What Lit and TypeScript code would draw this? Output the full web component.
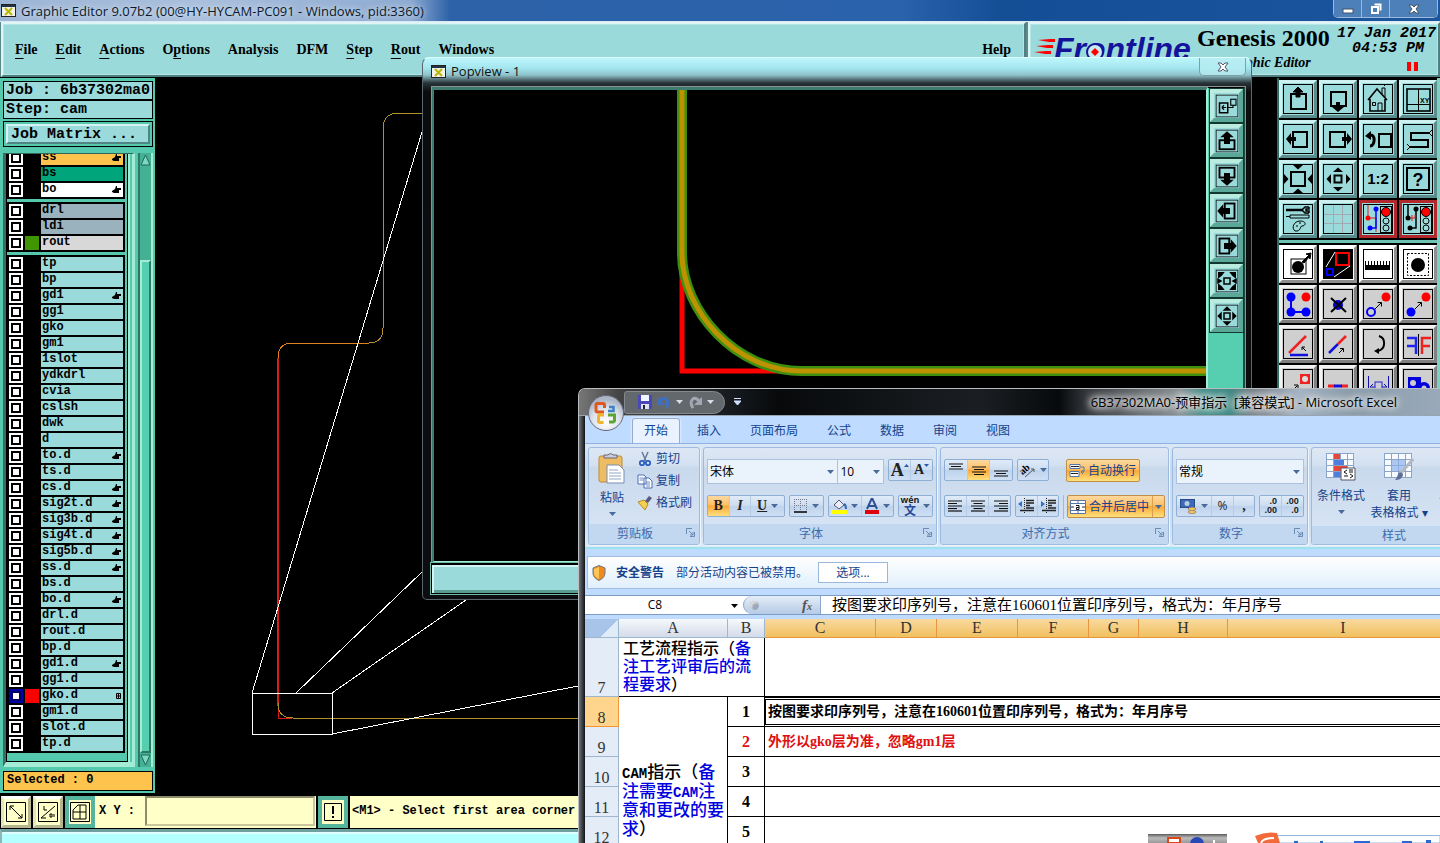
import { LitElement, html, svg, css, TemplateResult } from "lit";
import { customElement, property } from "lit/decorators.js";

const base = css`
  *, *::before, *::after { box-sizing: border-box; }
  button, input, select { font: inherit; color: inherit; margin: 0; border-radius: 0; }
  button { cursor: pointer; padding: 0; }
  svg { display: block; flex: none; }
`;

/* ---------- CAM tool icons, drawn on a 32 x 32 grid ---------- */

const up = svg`<path d="M16 4l5 5h-3v5h-4v-5h-3z" stroke="#000"/>`;
const arrow = (deg: number, x: number, y: number, s = 1) =>
  svg`<path d="M0 -5L6 0H2V5H-2V0H-6Z" transform="translate(${x} ${y}) rotate(${deg}) scale(${s})"/>`;
const tip = (deg: number, x: number, y: number) =>
  svg`<path d="M0 -2.5L5 2H-5Z" transform="translate(${x} ${y}) rotate(${deg})"/>`;
const box = (x: number, y: number, w: number, h: number, sw = 2) =>
  svg`<rect x=${x} y=${y} width=${w} height=${h} fill="none" stroke="#000" stroke-width=${sw}/>`;
const dot = (x: number, y: number, c: string, r = 4.5) => svg`<circle cx=${x} cy=${y} r=${r} fill=${c}/>`;
const lights = svg`${box(18.5, 3.5, 11, 26, 1)}<circle cx="24" cy="9" r="4.500" fill="#f00" stroke="#000"/><circle cx="24" cy="18" r="3" fill="none" stroke="#000"/><circle cx="24" cy="25" r="3" fill="none" stroke="#000"/>`;

const icons: Record<string, TemplateResult | unknown> = {
  panUp: svg`${box(9, 11, 15, 15)}${up}`,
  panDown: svg`${box(9, 9, 15, 14)}${arrow(180, 16, 24)}`,
  home: svg`<g fill="none" stroke="#000"><path d="M6 17L15 6l10 11M8 16v12h15V16" stroke-width="1.600"/><path d="M20 11V5h3v9M16 28v-8h4v8M10.500 19.500h3v3h-3zM22 3l2-2"/></g>`,
  overview: svg`${box(5, 6, 23, 22, 1.6)}<path d="M16.500 6v22M5 21.500h23" stroke="#000"/><text x="18" y="20" font-size="7" font-family="Liberation Sans">XY</text>`,
  panLeft: svg`${box(11, 9, 14, 15)}${arrow(-90, 9, 16)}`,
  panRight: svg`${box(8, 9, 15, 15)}${arrow(90, 25, 16)}`,
  previous: svg`${box(17, 11, 12, 13)}<path d="M8 12c6-1 5 11 0 11" fill="none" stroke="#000" stroke-width="3"/><path d="M3 13l6-5v9z"/>`,
  serp: svg`<path d="M27 10H9v7h17v7H8" fill="none" stroke="#000" stroke-width="2"/><path d="M27 10l3-3M27 10l3 3M8 24l-3-3M8 24l-3 3" stroke="#000"/>`,
  zoomIn: svg`${box(9, 9, 14, 14)}${tip(180, 16, 4)}${tip(0, 16, 28)}${tip(90, 4, 16)}${tip(-90, 28, 16)}`,
  zoomOut: svg`${box(12.5, 12.5, 7, 7)}${tip(0, 16, 7)}${tip(180, 16, 26)}${tip(-90, 7, 16)}${tip(90, 26, 16)}`,
  ratio: svg`<text x="16" y="21" text-anchor="middle" font-size="15" font-weight="bold" font-family="Liberation Sans">1:2</text>`,
  help: svg`${box(5, 5, 22, 22)}<text x="16" y="23" text-anchor="middle" font-size="18" font-weight="bold" font-family="Liberation Sans">?</text>`,
  tools: svg`<path d="M4 7h17" stroke="#000" stroke-width="2.500"/><path d="M27 4h-4l-3 3 3 3h4M27 4v2h-3v2h3v2" stroke="#000" stroke-width="1.500" fill="none"/><path d="M4 13.500h4v-1.500h19v3H8v-1.500" fill="none" stroke="#000"/><path d="M13 28c-4-3-1-10 5-10 7 0 6 5 2 5-2 0-1 6-7 5zM14 23h2M17 20h2" fill="none" stroke="#000"/>`,
  grid: svg`<path d="M11.500 2v28M20.500 2v28M2 11.500h28M2 20.500h28" stroke="#a3a8b2" fill="none"/>`,
  netA: svg`<path d="M6 2v13h8v14" fill="none" stroke="#d22"/><path d="M14 6v19H8" fill="none" stroke="#00f" stroke-width="1.500"/>${dot(14, 6, "#00f", 2.5)}${dot(6, 15, "#f00", 2.5)}${dot(8, 25, "#00f", 2.5)}${lights}`,
  netB: svg`<path d="M6 2v13M14 6v19H8" fill="none" stroke="#000" stroke-width="1.500"/><path d="M7 15h6v-3M10 12v3M10 15v3" stroke="#d22" fill="none"/>${dot(14, 6, "#000", 2.5)}${dot(6, 15, "#000", 2.5)}${dot(8, 25, "#000", 2.5)}${lights}`,
  selOne: svg`${box(9, 11, 15, 15, 1)}${dot(16, 19, "#000", 6)}<path d="M20 14l7-7-3-1 5-1-1 6-1-2-5 6z" stroke="#000"/>`,
  selPoly: svg`<rect x="2" y="2" width="28" height="28" fill="#000"/><rect x="14" y="5" width="13" height="12" fill="none" stroke="#f00" stroke-width="2"/><rect x="5" y="21" width="6" height="6" fill="none" stroke="#00f" stroke-width="2"/><path d="M4 19l9-15M12 29l16-11" stroke="#fff"/>`,
  ruler: svg`<path d="M3 13h1v4h2v-4h1v4h2v-4h1v4h2v-4h1v4h2v-4h1v4h2v-4h1v4h2v-4h1v4h2v-4h1v4h2v-4h1v9H3z"/>`,
  selRef: svg`<rect x="5.500" y="5.500" width="21" height="22" fill="none" stroke="#000" stroke-dasharray="2 1.500"/>${dot(16, 17, "#000", 7)}`,
  nodes: svg`<path d="M9 9v15h15" fill="none" stroke="#00f" stroke-width="2"/>${dot(9, 9, "#00f")}${dot(9, 24, "#00f")}${dot(24, 24, "#00f")}${dot(24, 9, "#f00")}`,
  delNode: svg`${dot(16, 17, "#00c", 5)}<path d="M9 10l15 14M24 10L9 24" stroke="#000" stroke-width="2"/>`,
  moveA: svg`<circle cx="9" cy="24" r="4" fill="none" stroke="#00f" stroke-width="2"/>${dot(24, 9, "#f00")}<path d="M13 21l6-6M15.500 14.500h4v4" fill="none" stroke="#000"/>`,
  moveB: svg`${dot(9, 24, "#00f")}${dot(24, 9, "#f00")}<path d="M13 21l6-6M15.500 14.500h4v4" fill="none" stroke="#000"/>`,
  angle: svg`<path d="M7 25L24 8" stroke="#e22" stroke-width="2.500"/><path d="M8 27h18" stroke="#11d" stroke-width="2.500"/><path d="M24 23l-4-4M20 22v-3h3" stroke="#000" fill="none"/>`,
  line: svg`<path d="M7 25l9-9" stroke="#11d" stroke-width="2.500"/><path d="M16 16l8-8" stroke="#e22" stroke-width="2.500"/><path d="M17 25l4-4M18 20.500h3.500V24" stroke="#000" fill="none"/>`,
  rotate: svg`<path d="M17 8c7 2 7 13-1 15" fill="none" stroke="#000" stroke-width="2"/><path d="M12 23l5-3v6z"/>`,
  mirror: svg`<path d="M5 10h9v16M14 18H5" fill="none" stroke="#22e" stroke-width="2.500"/><path d="M16.500 6v22" stroke="#000"/><path d="M29 10h-9v16M20 18h8" fill="none" stroke="#e22" stroke-width="2.500"/>`,
  copy: svg`<rect x="18" y="6" width="10" height="10" fill="#e22"/>${dot(23, 11, "#ddd", 3)}<path d="M9 24l6-6M12 17h4v4" stroke="#000" fill="none"/>`,
  stretch: svg`<path d="M6 18h7M19 18h7" stroke="#e22" stroke-width="3"/><path d="M12 18h8" stroke="#11d" stroke-width="3"/>`,
  between: svg`<path d="M6.500 8v24M26.500 8v24M8 19h17M8 19l3-3M25 19l-3-3" stroke="#11a" fill="none"/><rect x="13" y="14" width="7" height="9" fill="#ccd" stroke="#22c"/>`,
  union: svg`<rect x="6" y="9" width="13" height="12" fill="#00d"/><circle cx="11" cy="15" r="3" fill="#ccc"/><circle cx="22" cy="20" r="6" fill="#00d"/><circle cx="22" cy="20" r="2.500" fill="#ccc"/>`,
  popBox: svg`${box(6, 12, 11, 13)}${box(21, 7, 7, 8, 1.5)}<path d="M17 18h7v-3M9 18h6M9 18l3-3M9 18l3 3" fill="none" stroke="#000" stroke-width="1.500"/>`,
  popUp: svg`${box(6, 15, 20, 12, 2.5)}<path d="M16 3l9 8h-5v9h-8v-9H7z"/>`,
  popDown: svg`${box(6, 5, 20, 13, 2.5)}<path d="M16 29l9-8h-5v-9h-8v9H7z"/>`,
  popLeft: svg`${box(13, 6, 13, 20, 2.5)}<path d="M3 16l8-9v5h9v8h-9v5z"/>`,
  popRight: svg`${box(6, 6, 13, 20, 2.5)}<path d="M29 16l-8-9v5h-9v8h9v5z"/>`,
  popFit: svg`${box(12, 12, 8, 8, 2)}<path d="M4 4h9l-4 5-5 4zM28 4h-9l4 5 5 4zM4 28h9l-4-5-5-4zM28 28h-9l4-5 5-4zM3 12l7 4-7 4zM29 12l-7 4 7 4z"/>`,
  popAll: svg`${box(12, 12, 8, 8, 2)}<path d="M16 3l6 6H10zM16 29l6-6H10zM3 16l6-6v12zM29 16l-6-6v12z"/>`,
};

const icon = (name: string, size = 32) =>
  svg`<svg width=${size} height=${size} viewBox="0 0 32 32" aria-hidden="true">
    ${icons[name]}<rect x="1.500" y="1.500" width="29" height="29" fill="none" stroke="#000"/></svg>`;

const xLogo = html`<svg width="15" height="13" viewBox="0 0 15 13"><rect x=".5" y=".5" width="14" height="12" fill="#f2f2ea" stroke="#222"/><rect x="1" y="1" width="13" height="2" fill="#234"/><path d="M4 4l7 7M11 4l-7 7" stroke="#b8b800" stroke-width="2"/></svg>`;

/* ---------- Layer list ---------- */

interface Layer { name: string; tone?: string; swatch?: string; mark?: string; active?: boolean }
const hands = new Set(["ss", "bo", "gd1", "to.d", "cs.d", "sig2t.d", "sig3b.d", "sig4t.d", "sig5b.d", "ss.d", "bo.d", "gd1.d"]);
const groups: Layer[][] = [
  [{ name: "ss", tone: "amber" }, { name: "bs", tone: "green" }, { name: "bo", tone: "white" }],
  [{ name: "drl", tone: "slate" }, { name: "ldi", tone: "slate" }, { name: "rout", tone: "grey", swatch: "lime" }],
  "tp bp gd1 gg1 gko gm1 1slot ydkdrl cvia cslsh dwk d to.d ts.d cs.d sig2t.d sig3b.d sig4t.d sig5b.d ss.d bs.d bo.d drl.d rout.d bp.d gd1.d gg1.d gko.d gm1.d slot.d tp.d"
    .split(" ")
    .map((name) => (name === "gko.d" ? { name, swatch: "red", active: true, mark: "grid" } : { name })),
];

@customElement("layer-panel")
class LayerPanel extends LitElement {
  static styles = [base, css`
    :host { display: flex; flex-direction: column; width: 155px; padding: 3px 2px 2px 3px; background: #55c9ad; border-bottom: 2px solid #000;
      font: bold 15px/17px "Liberation Mono", monospace; color: #000; }
    .info { height: 19px; border: 1px solid #000; background: #9adadb; padding: 0 2px; white-space: pre; }
    .matrix { margin-top: 2px; height: 26px; border: 1px solid #000; padding: 2px; }
    .matrix button { display: block; width: 100%; height: 100%; text-align: left; padding: 0 3px; background: #9adadb;
      border: 2px solid; border-color: #d5f3f3 #4f8585 #4f8585 #d5f3f3; }
    .lists { flex: 1; min-height: 0; margin: 6px 0 4px; display: flex; gap: 3px; }
    .frame { flex: 1; min-width: 0; display: flex; border-top: 1px solid #2f665a; border-left: 3px solid #3d6c62; border-bottom: 5px solid #a5ecd6; border-right: 3px solid #a5ecd6; padding-right: 4px; }
    .list { flex: 1; min-width: 0; overflow: hidden; display: flex; flex-direction: column; justify-content: flex-end; gap: 3px;
      border: 1px solid #000; border-top: 0; padding: 0 2px 8px 0; box-shadow: 2px 0 0 #a5ecd6; }
    .group { flex: none; background: #000; padding: 1px 2px; }
    .row { height: 16px; padding: 1px 0; display: grid; grid-template-columns: 14px 14px 1fr; gap: 2px; }
    .row input { appearance: none; width: 14px; height: 14px; background: #fff; border: 2px solid #fff; display: grid; }
    .row input::before { content: ""; border: 2px solid #000; background: #fff; }
    .row.active input { border-color: #0000a8; }
    .row.active input::before { border-color: #000060; }
    .lime { background: #3f9600; } .red { background: #f00; }
    .name { display: flex; align-items: center; justify-content: space-between; padding: 0 2px 1px 1px; background: #9adadb; font-size: 12px; line-height: 13px; }
    .amber .name { background: #fdc34c; } .green .name { background: #00a57c; } .white .name { background: #fff; }
    .slate .name { background: #9ab2bd; } .grey .name { background: #d8d8d8; }
    .scroll { width: 15px; display: flex; flex-direction: column; border-right: 2px solid #a5ecd6; border-left: 2px solid #2f7866; background: #44b094; }
    .thumb { margin-top: 93px; flex: 1; background: #55cfb0; border: 2px solid; border-color: #a5ecd6 #2f7866 #2f7866 #a5ecd6; }
    .selected { height: 20px; border: 1px solid #000; background: #fdc34c; padding: 0 3px; font-size: 12px; line-height: 17px; }
  `];
  hand = html`<svg width="9" height="8" viewBox="0 0 9 8"><path d="M0 5l3-2 1-3h1v2h4v2H7v3H2L0 6z"/></svg>`;
  gridMark = html`<svg width="5" height="6" viewBox="0 0 5 6"><path d="M.5 .5h4v5h-4zM2.500 0v6M0 3h5" fill="none" stroke="#000"/></svg>`;
  render() {
    const tri = (d: string) => html`<svg width="11" height="14" viewBox="0 0 11 14"><path d=${d} fill="#7fd8c4" stroke="#1f6858"/></svg>`;
    return html`
      <div class="info">Job : 6b37302ma0</div>
      <div class="info">Step: cam</div>
      <div class="matrix"><button>Job Matrix ...</button></div>
      <div class="lists">
        <div class="frame"><div class="list">
          ${groups.map((g) => html`<div class="group">${g.map((l) => html`
            <label class="row ${l.tone ?? ""} ${l.active ? "active" : ""}">
              <input type="checkbox"><span class=${l.swatch ?? ""}></span>
              <span class="name">${l.name}${hands.has(l.name) ? this.hand : l.mark ? this.gridMark : ""}</span>
            </label>`)}</div>`)}
        </div></div>
        <div class="scroll">${tri("M5.5 2L10 12H1z")}<div class="thumb"></div>${tri("M5.5 12L10 2H1z")}</div>
      </div>
      <div class="selected">Selected : 0</div>`;
  }
}

/* ---------- Tool grid ---------- */

@customElement("tool-box")
class ToolBox extends LitElement {
  static styles = [base, css`
    :host { display: block; width: 163px; background: #000; border-left: 2px solid #2f6e62; border-right: 3px solid #7fd0c0; }
    .grid { display: grid; grid-template-columns: repeat(4, 38px); gap: 2px; padding-top: 2px; }
    .grid + .grid { margin-top: 2px; border-top: 3px solid #6fc4b4; padding-top: 2px; }
    button { width: 38px; height: 38px; background: #9adadb; border: 3px solid; border-color: #cdf0f0 #5b8c8e #5b8c8e #cdf0f0; }
    .netA, .netB { border-color: #b3282c; }
    .pale { background: #fff; border-color: #fff #8e8e8e #8e8e8e #fff; }
    .plain { background: #cfcfcf; border-color: #f2f2f2 #808080 #808080 #f2f2f2; }
  `];
  top = ["panUp", "panDown", "home", "overview", "panLeft", "panRight", "previous", "serp", "zoomIn", "zoomOut", "ratio", "help", "tools", "grid", "netA", "netB"];
  edit = ["selOne", "selPoly", "ruler", "selRef", "nodes", "delNode", "moveA", "moveB", "angle", "line", "rotate", "mirror", "copy", "stretch", "between", "union"];
  render() {
    return html`
      <div class="grid">${this.top.map((n) => html`<button class="tool ${n === "grid" ? "" : n}" aria-label=${n}>${icon(n)}</button>`)}</div>
      <div class="grid">${this.edit.map((n, i) => html`<button class=${i < 4 ? "pale" : "plain"} aria-label=${n}>${icon(n)}</button>`)}</div>`;
  }
}

/* ---------- Popview window ---------- */

@customElement("pop-view")
class PopView extends LitElement {
  static styles = [base, css`
    :host { display: flex; flex-direction: column; padding: 0 5px 5px 8px; border: 1px solid #59666c; border-top-color: #dff; border-radius: 7px 7px 5px 5px;
      background: linear-gradient(#bdf6fb 0, #a3e6ef 10px, #8fc3cb 17px, #2a3438 25px, #0a0c0e 34px, #0c0d10); }
    .title { height: 28px; display: flex; align-items: flex-start; gap: 5px; font: 13px/26px "Open Sans", sans-serif; color: #111; }
    .title svg { margin-top: 7px; }
    .title span { flex: 1; }
    .close { width: 47px; height: 18px; border: 1px solid #7ea0a8; border-top: 0; border-radius: 0 0 5px 5px; background: #b7ecf3cc; display: grid; place-items: center; }
    .close svg { margin: 0; }
    .body { flex: 1; min-height: 0; display: flex; border: 1px solid #8a9296; border-bottom: 0; background: #000; }
    .view { flex: 1; min-width: 0; border: 2px solid; border-color: #3f7c70 #a5ecd6 #a5ecd6 #3f7c70; border-top-width: 3px; }
    .view svg { width: 100%; height: 100%; }
    .tools { width: 37px; padding: 1px 2px; background: #55cfb0; border-right: 2px solid #1a4a40; display: flex; flex-direction: column; gap: 2px; border-top: 1px solid #000; }
    .tools button { width: 33px; height: 33px; display: grid; place-items: center; background: #9adadb; border: 4px solid; border-color: #b9ecdf #5aa898 #5aa898 #b9ecdf; outline: 1px solid #12382f; }
    .foot { height: 31px; border: 1px solid #000; background: #9adadb; border-top: 2px solid #000; box-shadow: inset 2px 2px #d5f3f3, inset -2px -3px #5b9c92; outline: 1px solid #70bba8; }
  `];
  render() {
    return html`
      <div class="title">${xLogo}<span>Popview - 1</span>
        <button class="close" aria-label="Close"><svg width="12" height="10" viewBox="0 0 12 10"><path d="M1 1h3l2 2 2-2h3L8 5l3 4H8L6 7 4 9H1l3-4z" fill="#fff" stroke="#556"/></svg></button></div>
      <div class="body">
        <div class="view"><svg><g fill="none">
          <path d="M248 180V281H360" stroke="#f00" stroke-width="5"/>
          <path d="M248 0V163C248 221 302 281 367 281H2000" stroke="#3f8f10" stroke-width="10"/>
          <path d="M248 0V163C248 221 302 281 367 281H2000" stroke="#bd9200" stroke-width="5"/>
        </g></svg></div>
        <div class="tools">${["popBox", "popUp", "popDown", "popLeft", "popRight", "popFit", "popAll"].map((n) => html`<button aria-label=${n}>${icon(n, 24)}</button>`)}</div>
      </div>
      <div class="foot"></div>`;
  }
}

/* ---------- Excel window ---------- */

const caret = html`<svg class="caret" width="7" height="4" viewBox="0 0 7 4"><path d="M0 0h7L3.500 4z" fill="currentColor"/></svg>`;
const lines = (ws: number[], align: number, y = 3) => html`<svg width="16" height="16" viewBox="0 0 16 16">${ws.map((w, i) =>
  svg`<path d="M${(16 - w) * align} ${y + i * 2.5}h${w}" stroke="#111" stroke-width="1.200"/>`)}</svg>`;
const indent = (d: string) => html`<svg width="16" height="16" viewBox="0 0 16 16"><path d="M8 2.500h8M8 5h8M8 7.500h4M8 10h8M2 12.500h14" stroke="#222" stroke-width="1.300"/><path d="M6.500 0v16" stroke="#222" stroke-dasharray="1 1"/><path d=${d} fill="#2f6fd0"/></svg>`;

@customElement("excel-window")
class ExcelWindow extends LitElement {
  @property() file = "6B37302MA0-预审指示";
  static styles = [base, css`
    :host { display: flex; flex-direction: column; overflow: hidden; padding-left: 6px; border: 1px solid #b9bdc2; border-right: 0; border-bottom: 0; border-radius: 7px 0 0 0;
      font: 12px/16px "Open Sans", "Noto Sans CJK SC", sans-serif; color: #15428b;
      background: linear-gradient(90deg, #6d7377 0, #202327 5px, #000 7px); }
    button { background: none; border: 0; }
    .title { flex: none; height: 27px; display: flex; align-items: center; margin-left: -6px; padding-left: 45px; position: relative; border-bottom: 1px solid #98a4b0;
      background: linear-gradient(90deg, #777 0, #444 40px, #14171b 160px, #07090b 200px, #1b1f23 400px, #07090b 480px, #383c40 510px, #8b9296 600px, #3f8f88 625px, #3d8a84 650px, #777f88 675px, #a4b4c4 720px, #8b9cab 770px, #99a9b9); }
    .qat { display: flex; align-items: center; gap: 5px; height: 23px; padding: 0 10px 0 13px; border-radius: 3px 12px 12px 3px; background: #63686d; border: 1px solid #85898d; }
    .qat .caret { color: #d5dde8; }
    .more { margin-left: 9px; }
    .caption { flex: 1; text-align: right; padding-right: 43px; color: #000; font-size: 13px; white-space: pre; text-shadow: 0 0 6px #fff, 0 0 8px #ddd, 0 0 8px #ddd, 0 0 10px #ccc; }
    .orb { position: absolute; left: 9px; top: 6px; width: 36px; height: 36px; }
    .sheet { flex: 1; min-height: 0; display: flex; flex-direction: column; background: #bfdbff; overflow: hidden; }
    .tabs { flex: none; height: 27px; padding: 2px 0 0 47px; display: flex; }
    .tabs button { height: 25px; padding: 0 11px; margin-right: 7px; }
    .tabs button + button { padding: 0 10px; margin-right: 9px; }
    .tabs .on { background: #e9f3ff; border: 1px solid #9ac; border-bottom: 0; border-radius: 3px 3px 0 0; box-shadow: 0 0 3px #fff; }
    .ribbon { flex: none; height: 106px; display: flex; gap: 3px; padding: 3px 0 2px 3px; border-top: 1px solid #8db2e3; border-bottom: 2px solid #9be3ef; background: linear-gradient(#dbe7f5, #c8daef 20%, #cfdff2 80%, #dce9f8); }
    .group { flex: none; display: flex; flex-direction: column; border: 1px solid #9dbbde; border-radius: 3px; box-shadow: 1px 1px #eef5fd; background: linear-gradient(#dee8f4, #d2e0f0 18px, #c9d9ec 19px, #d9e6f6); overflow: hidden; }
    .group > footer { margin-top: auto; height: 20px; background: #c1d8f0; color: #3e6aaa; text-align: center; line-height: 19px; position: relative; padding-right: 18px; }
    .launch { position: absolute; right: 4px; top: 4px; }
    .clip { width: 112px; } .font { width: 234px; } .align { width: 229px; } .num { width: 136px; } .style { width: 166px; }
    .group.style > footer { padding-right: 0; }
    .cols { display: flex; align-items: flex-start; padding: 0 5px; gap: 6px; }
    .big { display: flex; flex-direction: column; align-items: center; gap: 6px; width: 36px; padding-top: 4px; color: inherit; }
    .small { display: flex; flex-direction: column; }
    .small button { display: flex; align-items: center; gap: 3px; height: 22px; padding: 0 1px; white-space: nowrap; }
    .rows { display: flex; flex-direction: column; gap: 11px; padding: 11px 3px 0; }
    .line { display: flex; gap: 4px; height: 25px; align-items: flex-start; }
    .rows .line + .line { height: 22px; }
    .set { display: flex; height: 22px; border: 1px solid #8faed4; border-radius: 2px; background: linear-gradient(#e0ebf8, #cbdcf0 50%, #bdd2ec 51%, #cfe0f4); }
    .set button { display: flex; align-items: center; justify-content: center; gap: 4px; min-width: 0; border-left: 1px solid #b5cbe6; flex: 1; color: #222; }
    .set button:first-child { border-left: 0; }
    .set .wide { flex: none; width: 34px; }
    .set .on, .hot { background: linear-gradient(#fdd9a0, #fdc067 45%, #fba93a 50%, #fde07c); }
    .caret { color: #4a6a9a; }
    .combo { position: relative; display: flex; }
    .combo select { appearance: none; height: 25px; width: 100%; padding: 0 2px; border: 1px solid #abc1de; background: #eaf2fb; color: #000; outline: 0; }
    .combo .caret { position: absolute; right: 4px; top: 11px; }
    .face { width: 132px; margin-right: -5px; } .pt { width: 47px; } .fmt { width: 128px; }
    .hot { display: flex; align-items: center; gap: 3px; height: 23px; padding: 0 3px 0 2px; border: 1px solid #c0904a; border-radius: 2px; white-space: nowrap; }
    .hot.merge { padding-right: 0; }
    .drop { align-self: stretch; width: 12px; display: grid; place-items: center; border-left: 1px solid #d9a050; }
    .b { font: bold 14px "Liberation Serif", serif; } .i { font: italic bold 14px "Liberation Serif", serif; } .u { text-decoration: underline; }
    .grow { font-size: 18px; }
    .set .grow, .set .shrink { gap: 0; align-items: center; }
    .grow svg, .shrink svg { align-self: flex-start; margin-top: 4px; }
    .w79 { width: 80px; } .w36 { width: 36px; } .w66 { width: 67px; } .w44 { width: 45px; } .w69 { width: 69px; } .w32 { width: 32px; }
    .vsep { width: 1px; height: 24px; background: #9dbbde; margin-right: -1px; }
    .fit { width: 9px; }
    .styles { display: flex; gap: 2px; padding: 5px 3px; white-space: nowrap; }
    .styles button { display: flex; flex-direction: column; align-items: center; width: 52px; flex: none; color: inherit; line-height: 17px; }
    .styles button svg:first-child { margin-bottom: 6px; }
    .styles .caret { margin-top: 6px; }
    .styles .wide { width: 60px; }
    .warn { flex: none; margin: 7px 0 6px 2px; height: 33px; display: flex; align-items: center; gap: 12px; padding: 0 4px; border: 1px solid #a3bfe0; border-right: 0; background: linear-gradient(#fff, #e0effc); }
    .warn svg { margin-right: -2px; }
    .warn button { height: 21px; width: 70px; border: 1px solid #9ab8dc; background: #fff; margin-left: -2px; }
    .formula { flex: none; display: flex; height: 20px; border-top: 1px solid #7c9cc4; border-bottom: 1px solid #7c9cc4; background: #fff; margin-bottom: 4px; color: #000; }
    .where { width: 158px; position: relative; display: flex; }
    .where input { width: 140px; text-align: center; border: 0; background: none; outline: 0; }
    .where .caret { position: absolute; right: 5px; top: 8px; color: #000; }
    .fx { width: 78px; padding: 0 8px 0 6px; display: flex; justify-content: space-between; align-items: center; border-radius: 10px 0 0 10px; border: 1px solid #8aa6cc; border-width: 0 1px; background: linear-gradient(#e4edf8, #b5cbe6); font: italic bold 15px "Liberation Serif", serif; color: #555; }
    .fx i:first-child { width: 9px; height: 9px; border-radius: 5px; background: #9aa8bb; box-shadow: inset 2px 2px 2px #ddd; }
    .fx small { font-size: 10px; }
    .formula > input { flex: 1; min-width: 0; border: 0; outline: 0; padding: 0 11px; font: 15px/18px "Liberation Serif", "Noto Sans CJK SC", serif; color: #000; }
    table { flex: none; table-layout: fixed; width: 874px; border-collapse: separate; border-spacing: 0; background: #fff; color: #000; }
    th, td { padding: 0; font-family: "Liberation Serif", "Noto Sans CJK SC", serif; overflow: hidden; }
    thead th { height: 19px; font-size: 16px; line-height: 18px; font-weight: normal; color: #333; background: linear-gradient(#f6f9fc, #d3dbe9); border-right: 1px solid #9eb6ce; border-bottom: 1px solid #9eb6ce; }
    thead .pick { background: linear-gradient(#f9d99f, #f1c15f); border-color: #e8963e; }
    thead .corner { background: linear-gradient(135deg, #a9c4e9 65%, #e0ebf8 66%); }
    tbody th { vertical-align: bottom; height: 30px; font-size: 16px; line-height: 16px; font-weight: normal; color: #333; background: #e4ecf7; border-right: 1px solid #9eb6ce; border-bottom: 1px solid #9eb6ce; }
    tbody .tall { height: 59px; }
    tbody .cur { background: #ffd58d; border-color: #f29536; }
    td { border-right: 1px solid #000; border-bottom: 1px solid #000; font-weight: bold; }
    td.no { text-align: center; font-size: 16px; }
    td.txt { font-size: 14px; line-height: 18px; padding: 0 3px; white-space: nowrap; }
    td.red { color: #e01010; }
    td.sel { border-top: 3px double #000; border-bottom: 3px double #000; border-left: 1px solid #000; padding-left: 2px; }
    .rich { font-size: 16px; line-height: 18px; padding: 0 4px; font-weight: 500; vertical-align: middle; white-space: nowrap; }
    .cam { font-size: 17px; line-height: 19px; padding: 66px 0 0 3px; vertical-align: top; }
    .rich b { font-weight: 500; color: #0000e0; }
    .mono { font: bold 14px "Liberation Mono", monospace; }
    .wen { display: flex; flex-direction: column; align-items: center; font: bold 9px/8px "Open Sans", sans-serif; }
    .wen b { font: bold 12px/12px "Noto Sans CJK SC", sans-serif; color: #2a4a9a; }
    .dec { font: bold 9px/9px "Liberation Sans", sans-serif; white-space: pre; text-align: right; }
  `];
  launch = html`<svg class="launch" width="9" height="9" viewBox="0 0 9 9"><path d="M.5 6V.5H6M4 8.500h4.500V4M3 3l4 4M7 4v3H4" fill="none" stroke="#6a8ab5"/></svg>`;
  orb() {
    return html`<svg class="orb" viewBox="0 0 36 36"><defs><radialGradient id="o" cx="50%" cy="75%" r="65%"><stop offset="0" stop-color="#fff"/><stop offset=".6" stop-color="#dde3ec"/><stop offset="1" stop-color="#a9b4c4"/></radialGradient></defs>
      <circle cx="18" cy="18" r="17.500" fill="url(#o)" stroke="#667"/>
      <g fill="none" stroke-width="3"><path d="M16 17H9.500a1.500 1.500 0 0 1-1.500-1.500V10a1.500 1.500 0 0 1 1.500-1.500H15A1.500 1.500 0 0 1 16.500 10v3" stroke="#e0561b"/><path d="M16 20h-4a1.500 1.500 0 0 0-1.500 1.500V26a1.500 1.500 0 0 0 1.500 1.500h3.500" stroke="#f0b428"/><path d="M20 20h6.500v5.500A1.500 1.500 0 0 1 25 27h-4" stroke="#5fa535"/><path d="M20 16h5.500v-4H21" stroke="#3b82c8" stroke-width="2.500"/></g></svg>`;
  }
  cellGrid(extra: unknown) {
    return html`<svg width="30" height="28" viewBox="0 0 30 28"><rect x=".5" y=".5" width="27" height="24" fill="#f7faff" stroke="#8ba5c8"/><path d="M7.500 0v25M14.500 0v25M21.500 0v25M0 6.500h28M0 12.500h28M0 18.500h28" stroke="#8ba5c8"/>${extra}</svg>`;
  }
  render() {
    const tabs = ["开始", "插入", "页面布局", "公式", "数据", "审阅", "视图"];
    return html`
      <div class="title">${this.orb()}
        <div class="qat">
          <svg width="14" height="14" viewBox="0 0 14 14"><path d="M0 0h14v14H0z" fill="#4a48b8"/><path d="M3 0h8v6H3z" fill="#f2f6ff"/><path d="M3 9h8v5H3z" fill="#dfe4f0"/><path d="M5 10h2v4H5z" fill="#223"/></svg>
          <svg width="14" height="14" viewBox="0 0 14 14"><path d="M3 6c4-6 11-1 6 7" fill="none" stroke="#3f6fc0" stroke-width="3"/><path d="M0 2v8h8z" fill="#3f6fc0"/></svg>${caret}
          <svg width="14" height="14" viewBox="0 0 14 14"><path d="M11 6C7 0 0 5 5 13" fill="none" stroke="#a0a9b3" stroke-width="3"/><path d="M14 2v8H6z" fill="#a0a9b3"/></svg>${caret}
        </div>
        <svg class="more" width="7" height="8" viewBox="0 0 7 8"><path d="M0 .5h7M0 3h7L3.500 7z" fill="#cfe0ff" stroke="#cfe0ff"/></svg>
        <div class="caption">${this.file}  [兼容模式] - Microsoft Excel</div>
      </div>
      <div class="sheet">
        <nav class="tabs">${tabs.map((t, i) => html`<button class=${i ? "" : "on"}>${t}</button>`)}</nav>
        <div class="ribbon">
          <section class="group clip">
            <div class="cols">
              <button class="big"><svg width="28" height="32" viewBox="0 0 28 32"><rect x="1" y="4" width="23" height="26" rx="2" fill="#eebc62" stroke="#c08a35"/><path d="M6 6h13V3h-4a3 3 0 0 0-5 0H6z" fill="#ccd" stroke="#667"/><path d="M9 13h12l5 5v13H9z" fill="#fff" stroke="#778fb5"/><path d="M11 18h9M11 21h12M11 24h12M11 27h12" stroke="#8fa6c8"/></svg>粘贴${caret}</button>
              <div class="small">
                <button><svg width="16" height="16" viewBox="0 0 16 16"><path d="M5 1l4 9M11 1L7 10" stroke="#667a9a" stroke-width="1.500"/><circle cx="5" cy="12" r="2.200" fill="none" stroke="#2b5fc0" stroke-width="1.800"/><circle cx="11" cy="12" r="2.200" fill="none" stroke="#2b5fc0" stroke-width="1.800"/></svg>剪切</button>
                <button><svg width="16" height="16" viewBox="0 0 16 16"><path d="M1 2h6l2 2v7H1zM7 5h5l3 3v7H7z" fill="#fff" stroke="#4a6fb5"/><path d="M2.500 5h4M2.500 7h4M9 9h4M9 11h4M9 13h4" stroke="#6a8ac5"/></svg>复制</button>
                <button><svg width="16" height="16" viewBox="0 0 16 16"><path d="M1 7l6-2 4 4-3 6z" fill="#f5cf4f" stroke="#b58a20"/><path d="M8 6l4-5 3 2-4 5z" fill="#5a5a80"/></svg>格式刷</button>
              </div>
            </div>
            <footer>剪贴板${this.launch}</footer>
          </section>
          <section class="group font">
            <div class="rows">
              <div class="line">
                <label class="combo face"><select aria-label="字体"><option>宋体</option></select>${caret}</label>
                <label class="combo pt"><select aria-label="字号"><option>10</option></select>${caret}</label>
                <div class="set w44"><button class="b grow">A<svg width="5" height="3" viewBox="0 0 5 3"><path d="M0 3h5L2.500 0z" fill="#2f5aa5"/></svg></button><button class="b shrink">A<svg width="5" height="3" viewBox="0 0 5 3"><path d="M0 0h5L2.500 3z" fill="#2f5aa5"/></svg></button></div>
              </div>
              <div class="line">
                <div class="set w79"><button class="b on">B</button><button class="i">I</button><button class="b wide"><span class="u">U</span>${caret}</button></div>
                <div class="set w36"><button><svg width="14" height="14" viewBox="0 0 14 14"><path d="M.5 0v12M6.500 0v12M12.500 0v12M0 .5h13M0 6.500h13" stroke="#778" stroke-dasharray="1 1"/><path d="M0 13h13" stroke="#000" stroke-width="1.500"/></svg>${caret}</button></div>
                <div class="set w66"><button><svg width="16" height="16" viewBox="0 0 16 16"><path d="M3 7l5-5 5 5-5 4z" fill="#e8eef8" stroke="#557"/><path d="M13 6c2 1 2 3 2 5" stroke="#3a68b8" stroke-width="2" fill="none"/><path d="M0 12h16v4H0z" fill="#ff0"/></svg>${caret}</button>
                  <button><svg width="14" height="16" viewBox="0 0 14 16"><path d="M2 11L6.500 1h1L12 11M4 8h6" fill="none" stroke="#2d4f95" stroke-width="2"/><path d="M0 12h14v4H0z" fill="#e00010"/></svg>${caret}</button></div>
                <div class="set w36"><button><span class="wen">wén<b>文</b></span>${caret}</button></div>
              </div>
            </div>
            <footer>字体${this.launch}</footer>
          </section>
          <section class="group align">
            <div class="rows">
              <div class="line">
                <div class="set w69"><button>${lines([14, 10, 14], 0.5, 2)}</button><button class="on">${lines([14, 10, 14, 10], 0.5, 5)}</button><button>${lines([14, 10, 14], 0.5, 9)}</button></div>
                <div class="set w32"><button><svg width="16" height="16" viewBox="0 0 16 16"><text x="2" y="12" font-size="10" font-weight="bold" font-family="Liberation Serif" transform="rotate(-40 4 12)">ab</text><path d="M5 15l9-8M11 7h3v3" stroke="#555" fill="none"/></svg>${caret}</button></div>
                <span class="fit"></span>
                <button class="hot"><svg width="16" height="16" viewBox="0 0 16 16"><path d="M1 1.500h10v4H1zM1 8.500h9v5H1z" fill="#fff" stroke="#5575a5"/><path d="M2 3.500h8M2 10.500h7" stroke="#222"/><path d="M12 4h3v5h-3M14 7l-2 2 2 2" fill="none" stroke="#5575a5"/></svg>自动换行</button>
              </div>
              <div class="line">
                <div class="set w69"><button>${lines([14, 9, 14, 9, 14], 0)}</button><button>${lines([14, 9, 14, 9, 14], 0.5)}</button><button>${lines([14, 9, 14, 9, 14], 1)}</button></div>
                <div class="set w44"><button>${indent("M0 6l4-3v6z")}</button><button>${indent("M5 6L1 3v6z")}</button></div>
                <span class="vsep"></span>
                <button class="hot merge"><svg width="16" height="16" viewBox="0 0 16 16"><path d="M.5 1.500h15v13H.5zM8 1v3M8 12v3M0 4.500h16M0 11.500h16" fill="#fff" stroke="#5575a5"/><path d="M6 6.500h3v4H6.500V8.500H9" stroke="#111" fill="none"/><path d="M1 8h3M12 8h3" stroke="#222"/></svg>合并后居中<span class="drop">${caret}</span></button>
              </div>
            </div>
            <footer>对齐方式${this.launch}</footer>
          </section>
          <section class="group num">
            <div class="rows">
              <div class="line"><label class="combo fmt"><select aria-label="数字格式"><option>常规</option></select>${caret}</label></div>
              <div class="line">
                <div class="set w79"><button class="wide"><svg width="17" height="16" viewBox="0 0 17 16"><rect x=".5" y="1.500" width="14" height="8" fill="#3a6ab8" stroke="#2a4a88"/><circle cx="7" cy="5.500" r="2.500" fill="#bcd"/><ellipse cx="12" cy="11" rx="4" ry="1.500" fill="#f5cf4f" stroke="#a87"/><ellipse cx="12" cy="14" rx="4" ry="1.500" fill="#f5cf4f" stroke="#a87"/></svg>${caret}</button><button>%</button><button class="b">,</button></div>
                <div class="set w44"><button class="dec"><span>.0<br>.00</span></button><button class="dec"><span>.00<br>.0</span></button></div>
              </div>
            </div>
            <footer>数字${this.launch}</footer>
          </section>
          <section class="group style">
            <div class="styles">
              <button>${this.cellGrid(svg`<path d="M8 1h6v5H8zM8 13h13v5H8z" fill="#e5483a"/><path d="M8 7h10v5H8zM8 19h6v5H8z" fill="#4d7fdc"/><path d="M15 15h14v12H15z" fill="#fff" stroke="#556"/><path d="M21 17l-3 2 3 2M18 23h4M23 17h4M23 19h4M24 21l3 2-3 2" fill="none" stroke="#111"/>`)}条件格式${caret}</button>
              <button class="wide">${this.cellGrid(svg`<path d="M8 7h13v11H8z" fill="#8fb0ea" opacity=".7"/><path d="M29 6L17 20" stroke="#b5b9c2" stroke-width="3"/><path d="M11 27c3 0 8-1 8-6l-3-2c-3 2-2 5-5 8z" fill="#5a6f9a"/>`)}套用<span>表格格式 ▾</span></button>
              <button>${this.cellGrid("")}单元格<span>样式</span></button>
            </div>
            <footer>样式</footer>
          </section>
        </div>
        <div class="warn"><svg width="14" height="16" viewBox="0 0 14 16"><path d="M7 .5l6 2.500v5c0 4-3 6-6 7.500C4 14 1 12 1 8V3z" fill="#f28a1a" stroke="#6f7786"/><path d="M7 2v12c-3-2-5-3-5-6V4z" fill="#fbc65a"/></svg>
          <b>安全警告</b><span>部分活动内容已被禁用。</span><button>选项...</button></div>
        <div class="formula">
          <label class="where"><input aria-label="名称框" value="C8">${caret}</label>
          <div class="fx"><i></i><span>f<small>x</small></span></div>
          <input aria-label="编辑栏" value="按图要求印序列号，注意在160601位置印序列号，格式为：年月序号">
        </div>
        <table>
          <colgroup>${[34, 109, 37, 111, 61, 81, 71, 50, 89, 231].map((w) => html`<col style="width:${w}px">`)}</colgroup>
          <thead><tr><th class="corner"></th>${["A", "B", "C", "D", "E", "F", "G", "H", "I"].map((c, i) => html`<th class=${i > 1 ? "pick" : ""}>${c}</th>`)}</tr></thead>
          <tbody>
            <tr><th class="tall">7</th><td class="rich" colspan="2">工艺流程指示（<b>备<br>注工艺评审后的流<br>程要求</b>）</td><td colspan="7"></td></tr>
            <tr><th class="cur">8</th><td class="rich cam" rowspan="5"><span class="mono">CAM</span>指示（<b>备<br>注需要<span class="mono">CAM</span>注<br>意和更改的要<br>求</b>）</td><td class="no">1</td><td class="txt sel" colspan="7">按图要求印序列号，注意在160601位置印序列号，格式为：年月序号</td></tr>
            <tr><th>9</th><td class="no red">2</td><td class="txt red" colspan="7">外形以gko层为准，忽略gm1层</td></tr>
            ${[10, 11, 12].map((n) => html`<tr><th>${n}</th><td class="no">${n - 7}</td><td colspan="7"></td></tr>`)}
          </tbody>
        </table>
      </div>`;
  }
}

/* ---------- Desktop ---------- */

@customElement("app-root")
class AppRoot extends LitElement {
  static styles = [base, css`
    :host { display: flex; flex-direction: column; position: relative; height: 100vh; overflow: hidden; background: #000; color: #000;
      font: bold 12px/16px "Liberation Mono", monospace; }
    .titlebar { flex: none; height: 22px; display: flex; align-items: center; gap: 5px; padding-left: 1px; border-bottom: 1px solid #dceaf5; color: #0b1a2c; font: 13px/20px "Open Sans", sans-serif;
      background: linear-gradient(90deg, #9db6d6, #a9bfdc 200px, #8eabd2 410px, #2d62a8 450px, #2a62ab 900px, #144f96 1000px, #1a559d); }
    .titlebar span { flex: 1; text-shadow: 0 0 6px #fff; }
    .win { display: flex; align-self: flex-start; margin-right: 2px; border: 1px solid #9db8d8; border-top: 0; border-radius: 0 0 5px 5px; overflow: hidden; }
    .win button { height: 17px; width: 28px; background: #4d7fb8; border: 0; border-right: 1px solid #9db8d8; display: grid; place-items: center; }
    .win button:last-child { width: 47px; border-right: 0; }
    .header { flex: none; height: 56px; display: flex; gap: 2px; background: #5b8a8a; padding-left: 1px; border-bottom: 1px solid #000; }
    .menu, .brand { background: #9adadb; border: 2px solid; border-color: #dff5f5 #4f7f80 #4f7f80 #dff5f5; box-shadow: inset 0 0 0 1px #b4e6e6; }
    .menu { flex: 1; display: flex; align-items: center; gap: 18px; padding: 0 13px 0 12px; font: bold 14px/20px "Liberation Serif", serif; }
    .menu button { background: none; border: 0; }
    .menu u { text-underline-offset: 4px; }
    .menu .help { margin-left: auto; }
    .brand { width: 412px; display: flex; padding: 0 2px 0 4px; gap: 3px; }
    .name { flex: none; display: flex; flex-direction: column; font: bold 24px/28px "Liberation Serif", serif; white-space: nowrap; }
    .name i { font-size: 14px; line-height: 22px; align-self: flex-end; margin-right: 19px; }
    .clock { flex: 1; display: flex; flex-direction: column; align-items: flex-end; font: italic bold 15px/15px "Liberation Mono", monospace; padding-top: 2px; white-space: nowrap; }
    .clock time + time { margin-right: 12px; }
    .pause { width: 11px; height: 9px; border: 4px solid #f00; border-width: 0 4px; margin: 6px 18px 0 0; }
    main { flex: 1; min-height: 0; display: flex; }
    .canvas { flex: 1; min-width: 0; }
    .canvas svg { width: 100%; height: 100%; }
    .status { flex: none; height: 34px; display: flex; align-items: stretch; gap: 2px; padding: 1px 0 1px 1px; background: #000; }
    .status button { width: 30px; display: grid; place-items: center; background: #ffffc8; border: 3px solid; border-color: #fff #b5b590 #b5b590 #e5e5b8; }
    .status .on { background: #ffffc8; border: 4px solid #55b59c; }
    .xy { display: flex; flex: none; align-items: stretch; background: #ffffc8; white-space: pre; margin-left: -2px; }
    .xy span { width: 50px; padding-left: 4px; line-height: 31px; }
    .xy input { width: 170px; margin: 0 1px 2px 0; background: #ffffc8; border: 2px solid; border-color: #8d8d6c #c9c9a0 #c9c9a0 #8d8d6c; outline: 0; }
    .hint { flex: 1; background: #ffffc8; padding-left: 2px; line-height: 31px; white-space: nowrap; }
    .strip { flex: none; height: 14px; background: #b3ffff; border-top: 3px solid #6f9f9f; border-left: 2px solid #8fb5b5; box-shadow: inset 0 2px #dff; }
    pop-view { position: absolute; left: 422px; top: 57px; width: 830px; height: 543px; }
    excel-window { position: absolute; left: 578px; top: 388px; right: 0; bottom: 0; }
    .tray { position: absolute; left: 1148px; bottom: 0; width: 79px; height: 9px; background: linear-gradient(#777, #bbb 3px, #999); border-top: 1px solid #666; display: flex; align-items: flex-end; padding-left: 19px; }
    .ime { position: absolute; left: 1254px; right: 0; bottom: 0; height: 11px; }
  `];
  render() {
    const items = [["F", "ile"], ["E", "dit"], ["A", "ctions"], ["", "Options"], ["", "Analysis"], ["", "DFM"], ["S", "tep"], ["R", "out"], ["W", "indows"]];
    return html`
      <div class="titlebar">${xLogo}<span>Graphic Editor 9.07b2 (00@HY-HYCAM-PC091 - Windows, pid:3360)</span>
        <div class="win">
          <button aria-label="Minimise"><svg width="12" height="10"><rect x="1" y="5" width="10" height="4" fill="#fff" stroke="#456"/></svg></button>
          <button aria-label="Restore"><svg width="12" height="11"><path d="M4.500 1.500h6v6M2 4h6v6H2z" fill="none" stroke="#fff" stroke-width="2"/></svg></button>
          <button aria-label="Close"><svg width="12" height="10" viewBox="0 0 12 10"><path d="M1 1h3l2 2 2-2h3L8 5l3 4H8L6 7 4 9H1l3-4z" fill="#fff" stroke="#456"/></svg></button>
        </div></div>
      <div class="header">
        <nav class="menu">${items.map(([k, r]) => html`<button>${r === "Options" ? html`O<u>p</u>tions` : html`<u>${k}</u>${r}`}</button>`)}<button class="help">Help</button></nav>
        <div class="brand">
          <svg width="160" height="50" viewBox="0 0 160 50">
            <path d="M4 16l12-1h5v3h-6zM2 22l12-1h5v3h-6zM0 28l12-1h5v3h-6z" fill="#f00"/>
            <text x="20" y="36" font-family="Liberation Sans" font-size="32" font-weight="bold" font-style="italic" fill="#14149a">Frontline</text>
            <circle cx="61" cy="28" r="8" fill="#c9ecf0" stroke="#14149a" stroke-width="2"/><path d="M61 24l4 4-4 4-4-4z" fill="#f00"/>
          </svg>
          <div class="name">Genesis 2000<i>Graphic Editor</i></div>
          <div class="clock"><time>17 Jan 2017</time><time>04:53 PM</time><span class="pause"></span></div>
        </div>
      </div>
      <main>
        <layer-panel></layer-panel>
        <div class="canvas"><svg shape-rendering="crispEdges"><g transform="translate(-155 -78)" fill="none">
          <path d="M900 113H399Q383 113 383 129V328Q383 343 369 343" stroke="#b08e28"/>
          <path d="M369 343H293Q278 343 278 358" stroke="#e08020"/>
          <path d="M277.500 358V706" stroke="#2f7a1c"/><path d="M278.500 358V718H292" stroke="#d41c10"/>
          <path d="M278 703Q278 718 293 718H1277" stroke="#b08e28"/>
          <path d="M422 132L252 693M252.500 693.500H332.500V734.500H252.500ZM296 693L422 572M332 693L466 600M332 734L578 686" stroke="#fff"/>
        </g></svg></div>
        <tool-box></tool-box>
      </main>
      <div class="status">
        <button aria-label="Snap off"><svg width="20" height="20" fill="none" stroke="#000"><path d="M.5 .5h19v19H.5zM4 4l12 12M4 8V4h4M16 12v4h-4"/></svg></button>
        <button aria-label="Angle"><svg width="20" height="20" fill="none" stroke="#000"><path d="M.5 .5h19v19H.5zM3 16L17 4M3 16h5M6 4v4h3M12 12h2v3h-2zM16 12v3"/></svg></button>
        <button class="on" aria-label="Grid"><svg width="20" height="20" fill="none" stroke="#000"><path d="M.5 .5h19v19H.5zM3 8l5-5h8v14H3zM3 10h13M10 3v14"/></svg></button>
        <label class="xy"><span>X Y :</span><input></label>
        <button class="on" aria-label="Message"><svg width="18" height="18"><path d="M.5 .5h17v17H.5z" fill="none" stroke="#000"/><path d="M8 3h2v8H8zM8 13h2v2H8z"/></svg></button>
        <div class="hint">&lt;M1&gt; - Select first area corner</div>
      </div>
      <div class="strip"></div>
      <pop-view></pop-view>
      <excel-window></excel-window>
      <div class="tray"><svg width="48" height="6" viewBox="0 0 48 6"><path d="M1 1h12v5H1z" fill="#fff" stroke="#d84818" stroke-width="2"/><circle cx="30" cy="7" r="7" fill="#2848b8"/><path d="M46 3h2v3h-2z" fill="#fff"/></svg></div>
      <svg class="ime" width="186" height="11"><path d="M22 3.500H186V11H22z" fill="#fff" stroke="#9ab8dc"/><path d="M1 4Q12-1 23 1l3 10H4z" fill="#f26a3a"/><path d="M7 11q2-5 13-5" stroke="#fff" stroke-width="2" fill="none"/><path d="M40 9h4v2h-4zM66 9h3v2h-3zM100 9h16v2h-16zM148 9h10v2h-10zM172 8h5v3h-5z" fill="#2a6ad0"/></svg>`;
  }
}
